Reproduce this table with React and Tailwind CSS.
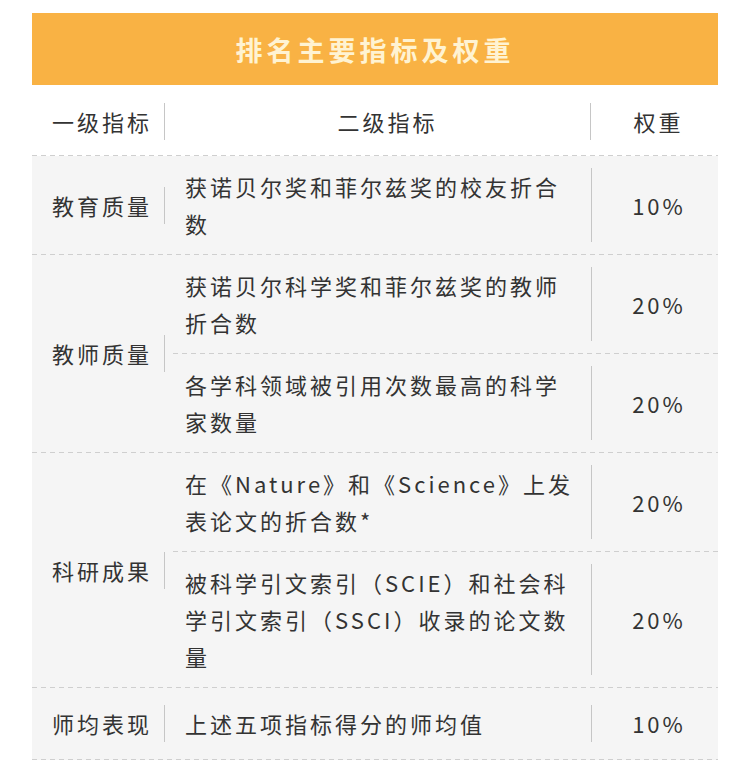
import React from 'react'

const font = "font-['Noto_Sans_CJK_SC','Noto_Sans',sans-serif]"

const Dash = ({ inner }) => (
  <div
    className={`h-px bg-[linear-gradient(to_right,#cfcfcf_55%,transparent_55%)] bg-[length:9px_1px] ${inner ? 'ml-[141px]' : ''}`}
  />
)

const rows = [
  {
    label: '教育质量',
    items: [{ lines: ['获诺贝尔奖和菲尔兹奖的校友折合', '数'], weight: '10%' }],
  },
  {
    label: '教师质量',
    items: [
      { lines: ['获诺贝尔科学奖和菲尔兹奖的教师', '折合数'], weight: '20%' },
      { lines: ['各学科领域被引用次数最高的科学', '家数量'], weight: '20%' },
    ],
  },
  {
    label: '科研成果',
    items: [
      { lines: ['在《Nature》和《Science》上发', '表论文的折合数*'], weight: '20%' },
      {
        lines: ['被科学引文索引（SCIE）和社会科', '学引文索引（SSCI）收录的论文数', '量'],
        weight: '20%',
      },
    ],
  },
  {
    label: '师均表现',
    items: [{ lines: ['上述五项指标得分的师均值'], weight: '10%' }],
    single: true,
  },
]

const SubRow = ({ item, single }) => (
  <div className={`flex ${single ? 'py-[17px]' : 'py-3'}`}>
    <div className="w-[418px] pl-3">
      {item.lines.map((l, i) => (
        <span key={i} className="block whitespace-nowrap">
          {l}
        </span>
      ))}
    </div>
    <div className="flex-1 flex items-center justify-center pl-2 border-l border-[#c6c6c6]">
      {item.weight}
    </div>
  </div>
)

const Group = ({ row }) => (
  <>
    <div className="flex">
      <div className="w-[141px] shrink-0 flex items-center pl-5">
        <span className="pr-3 border-r border-[#c6c6c6]">{row.label}</span>
      </div>
      <div className="flex-1 flex flex-col">
        {row.items.map((item, i) => (
          <React.Fragment key={i}>
            {i > 0 && <div className="h-px bg-[linear-gradient(to_right,#cfcfcf_55%,transparent_55%)] bg-[length:9px_1px]" />}
            <SubRow item={item} single={row.single} />
          </React.Fragment>
        ))}
      </div>
    </div>
    <Dash />
  </>
)

export default function App() {
  return (
    <div className={`w-[750px] h-[763px] bg-white pt-[13px] px-8 ${font} text-[#333] text-[22px] leading-[37px] tracking-[3px]`}>
      {/* title bar */}
      <div className="h-[72px] bg-[#f9b244] flex items-center justify-center text-[27px] font-bold text-[#fff3d2] tracking-[4px]">
        排名主要指标及权重
      </div>

      {/* header row */}
      <div className="h-[70px] flex items-center pt-[3px]">
        <div className="w-[141px] shrink-0 pl-5">
          <span className="pr-3 border-r border-[#c6c6c6] inline-block">一级指标</span>
        </div>
        <div className="w-[418px] pl-3 text-center border-r border-[#c6c6c6]">二级指标</div>
        <div className="flex-1 text-center pl-2">权重</div>
      </div>
      <Dash />

      <div className="bg-[#f5f5f5]">
        {rows.map((row, i) => (
          <Group key={i} row={row} />
        ))}
      </div>
    </div>
  )
}
